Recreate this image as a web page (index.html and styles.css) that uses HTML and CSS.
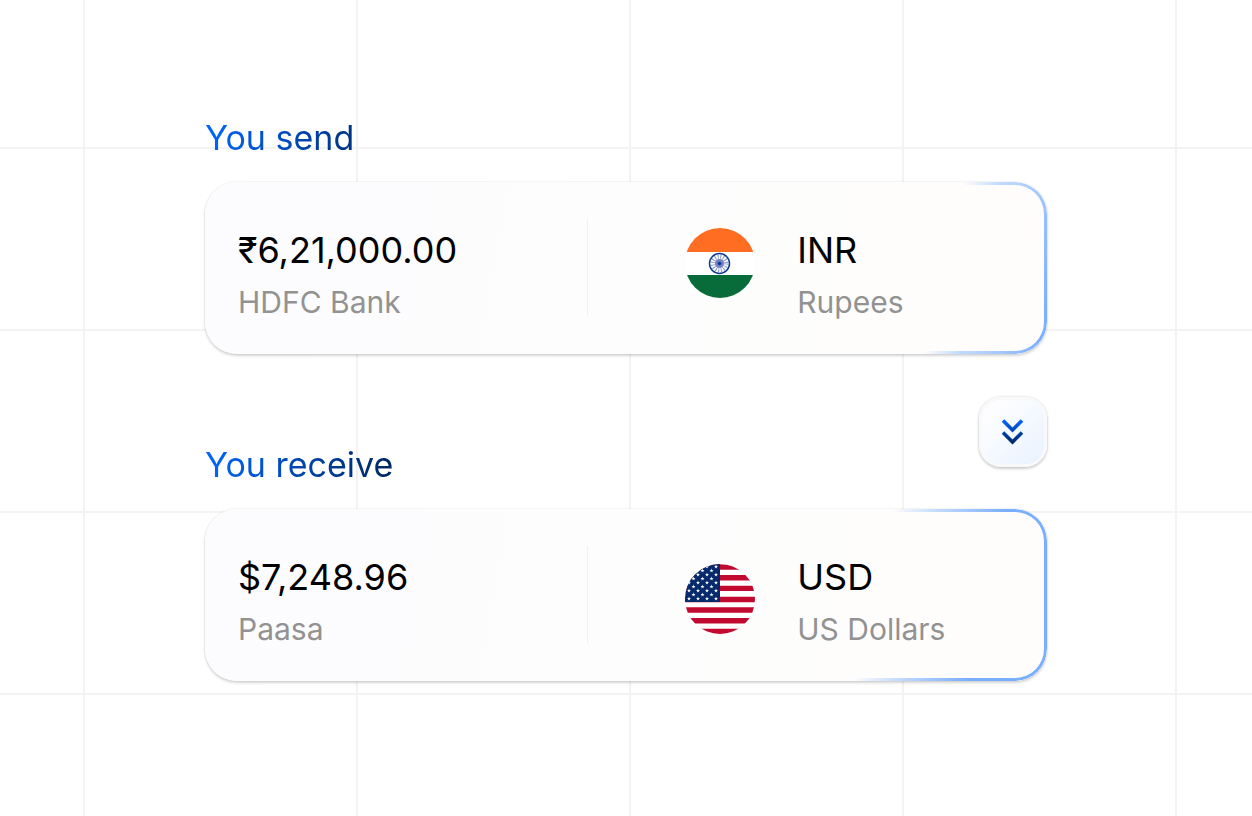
FILE: index.html
```html
<!DOCTYPE html>
<html lang="en">
<head>
    <meta charset="UTF-8">
    <meta name="viewport" content="width=device-width, initial-scale=1.0">
    <title>Transfer</title>
    <link rel="stylesheet" href="styles.css">
</head>
<body>
    <main class="transfer">
        <h2 class="label">You send</h2>
        <section class="card card-send">
            <div class="party">
                <p class="main-text">₹6,21,000.00</p>
                <p class="sub-text">HDFC Bank</p>
            </div>
            <div class="divider"></div>
            <div class="currency">
                <svg class="flag" viewBox="0 0 70 80" aria-hidden="true">
                    <defs>
                        <clipPath id="india"><circle cx="35" cy="35" r="35"/></clipPath>
                    </defs>
                    <g clip-path="url(#india)">
                        <rect width="70" height="24" fill="#ff6d22"/>
                        <rect y="24" width="70" height="23" fill="#fff"/>
                        <rect y="47" width="70" height="23" fill="#086c3a"/>
                    </g>
                    <circle cx="34.500" cy="35.500" r="10" fill="#fff" stroke="#0a3a94" stroke-width="1.500"/>
                    <circle cx="34.500" cy="35.500" r="6" fill="none" stroke="#8f9bd0" stroke-width="6" stroke-dasharray=".9 1.456"/>
                    <circle cx="34.500" cy="35.500" r="4.500" fill="#7582c2"/>
                    <circle cx="34.500" cy="35.500" r="1.800" fill="#0a3a94"/>
                </svg>
                <div>
                    <p class="main-text">INR</p>
                    <p class="sub-text">Rupees</p>
                </div>
            </div>
        </section>

        <div class="middle">
            <h2 class="label">You receive</h2>
            <button class="swap" type="button" aria-label="Convert">
                <svg width="24" height="28" viewBox="0 0 24 28" fill="none" stroke="url(#arrow)" stroke-width="3.600">
                    <defs>
                        <linearGradient id="arrow" gradientUnits="userSpaceOnUse" x1="0" y1="2" x2="0" y2="26">
                            <stop offset="0" stop-color="#0066ff"/>
                            <stop offset="1" stop-color="#002560"/>
                        </linearGradient>
                    </defs>
                    <path d="M2 2.500l9.500 9.500L21 2.500M2 14.500l9.500 9.500 9.500-9.500"/>
                </svg>
            </button>
        </div>

        <section class="card card-receive">
            <div class="party">
                <p class="main-text">$7,248.96</p>
                <p class="sub-text">Paasa</p>
            </div>
            <div class="divider"></div>
            <div class="currency">
                <svg class="flag" viewBox="0 0 70 80" aria-hidden="true">
                    <defs>
                        <clipPath id="usa"><circle cx="35" cy="44" r="35"/></clipPath>
                        <path id="star" d="M0-2l.5 1.400 1.500.1-1.200.9.400 1.500L0 1l-1.200.9.400-1.500-1.200-.9 1.500-.1z" fill="#fff"/>
                        <g id="row-a">
                            <use href="#star" x="4"/><use href="#star" x="13"/><use href="#star" x="22"/><use href="#star" x="31"/>
                        </g>
                        <g id="row-b">
                            <use href="#star" x="8.500"/><use href="#star" x="17.500"/><use href="#star" x="26.500"/>
                        </g>
                    </defs>
                    <g clip-path="url(#usa)">
                        <rect y="9" width="70" height="70" fill="#fff"/>
                        <path d="M0 12h70M0 22.700h70M0 33.400h70M0 44.500h70M0 55h70M0 65.700h70M0 76.500h70" stroke="#c20a30" stroke-width="5.400"/>
                        <rect y="9" width="35" height="38" fill="#05296b"/>
                        <use href="#row-a" y="11.500"/>
                        <use href="#row-b" y="15.500"/>
                        <use href="#row-a" y="19.500"/>
                        <use href="#row-b" y="23.500"/>
                        <use href="#row-a" y="27.500"/>
                        <use href="#row-b" y="31.500"/>
                        <use href="#row-a" y="35.500"/>
                        <use href="#row-b" y="39.500"/>
                        <use href="#row-a" y="43.500"/>
                    </g>
                </svg>
                <div>
                    <p class="main-text">USD</p>
                    <p class="sub-text">US Dollars</p>
                </div>
            </div>
        </section>
    </main>
</body>
</html>
```
FILE: styles.css
```css
body{
    margin: 0;
    min-height: 100vh;
    font-family: Inter, "Liberation Sans", sans-serif;
    background-color: #fff;
    background-image:
        linear-gradient(to right, #f3f3f3 2px, transparent 2px),
        linear-gradient(to bottom, #f3f3f3 2px, transparent 2px);
    background-size: 273px 182px;
    background-position: 83px 147px;
}

h2, p{
    margin: 0;
    font-weight: 400;
}

.transfer{
    max-width: 842px;
    margin: 0 auto;
    padding: 116px 0;
}

.label{
    width: fit-content;
    font-size: 34px;
    line-height: 44px;
    background: linear-gradient(to right, #0066ff, #00255f) 0 0 / 190px 100%;
    -webkit-background-clip: text;
    background-clip: text;
    color: transparent;
}

.card{
    position: relative;
    display: grid;
    grid-template-columns: 5fr 1px 6fr;
    margin-top: 22px;
    padding: 37px 0 38px;
    border-radius: 32px;
    background: linear-gradient(100deg, #fcfcff, #fdfdfd 50%, #fffdfc);
    box-shadow: 0 0 2px rgba(0, 0, 0, .14), 0 2px 3px rgba(0, 0, 0, .16);
}

/* blue edge that fades out to the left */
.card::before{
    content: "";
    position: absolute;
    inset: 0;
    padding: 3px;
    border-radius: 32px;
    mask: linear-gradient(#000 0 0) content-box exclude, linear-gradient(#000 0 0);
    pointer-events: none;
}

.card-send::before{
    background: linear-gradient(103deg, transparent 86%, #c4dbff 90%, #a3c7ff 95%, #7aaeff 99%);
}

.card-receive::before{
    background: linear-gradient(103deg, transparent 78%, #c4dbff 83%, #7aaeff 91%);
}

.party{
    padding: 9px 0 0 33px;
}

.divider{
    background: #f0f0f0;
}

.currency{
    display: flex;
    align-items: flex-start;
    gap: 42px;
    padding: 9px 0 0 97px;
}

.flag{
    width: 70px;
    height: 80px;
}

.main-text{
    font-size: 36px;
    line-height: 44px;
    color: #000;
}

.sub-text{
    margin-top: 16px;
    font-size: 30px;
    line-height: 28px;
    color: #929292;
}

.middle{
    display: flex;
    justify-content: space-between;
    align-items: flex-end;
    height: 90px;
    margin-top: 43px;
}

.swap{
    display: flex;
    align-items: center;
    justify-content: center;
    align-self: flex-start;
    width: 68px;
    height: 70px;
    padding: 0;
    border: 3px solid #f8f9fb;
    border-radius: 22px;
    background: linear-gradient(135deg, #fdfdff 20%, #e8f2ff);
    box-shadow: 0 0 3px rgba(0, 0, 0, .16), 0 2px 3px rgba(0, 0, 0, .16);
    cursor: pointer;
}
```
